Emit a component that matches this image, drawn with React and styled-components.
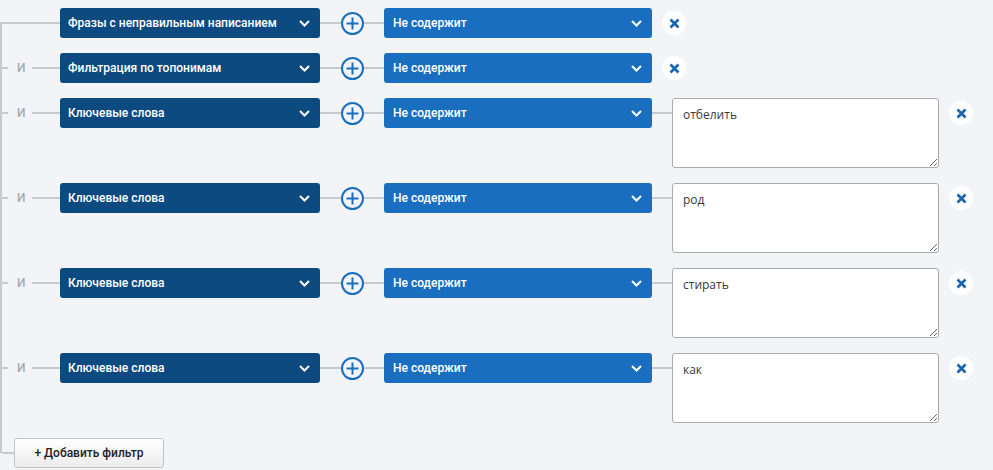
import React from 'react'
import styled, { createGlobalStyle } from 'styled-components'

const GlobalStyle = createGlobalStyle`
  html, body {
    margin: 0;
    background: #f3f4f8;
    font-family: Roboto, "Liberation Sans", Arial, sans-serif;
  }
`

const LINE = '#c9c9c9'

const Tree = styled.div`
  position: relative;
  padding: 8px 0 2px 0;

  &::before {
    content: '';
    position: absolute;
    left: 0;
    top: 22px;
    bottom: 17px;
    width: 2px;
    background: ${LINE};
  }
`

const Row = styled.div`
  display: flex;
  align-items: flex-start;
  margin-bottom: 15px;
`

const Track = styled.div`
  display: flex;
  align-items: center;
  height: 30px;
`

const Connector = styled(Track)`
  width: 60px;
  flex: none;
`

const Seg = styled.div`
  height: 2px;
  background: ${LINE};
  width: ${(p) => (p.$w ? `${p.$w}px` : 'auto')};
  flex: ${(p) => (p.$w ? 'none' : '1')};
  margin-left: ${(p) => (p.$ml || 0)}px;
`

const AndLabel = styled.span`
  width: 9px;
  margin-left: 9px;
  color: #a9a9a9;
  font-size: 12px;
  font-weight: 500;
`

const Select = styled.div`
  box-sizing: border-box;
  width: ${(p) => p.$w}px;
  height: 30px;
  flex: none;
  display: flex;
  align-items: center;
  justify-content: space-between;
  padding: 0 10px 0 ${(p) => p.$pl}px;
  border-radius: 3px;
  background: ${(p) => p.$bg};
  color: #fff;
  font-size: 12px;
  font-weight: 500;
  white-space: nowrap;
`

const PlusCircle = styled.div`
  box-sizing: border-box;
  width: 23px;
  height: 23px;
  flex: none;
  border: 2px solid #1a6ec0;
  border-radius: 50%;
  display: flex;
  align-items: center;
  justify-content: center;
`

const RemoveBtn = styled.div`
  width: 24px;
  height: 24px;
  flex: none;
  margin-left: 10px;
  margin-top: 3px;
  border-radius: 50%;
  background: #fff;
  display: flex;
  align-items: center;
  justify-content: center;
`

const Text = styled.textarea`
  box-sizing: border-box;
  width: 267px;
  height: 70px;
  flex: none;
  margin: 0;
  padding: 8px 10px;
  border: 1px solid #ababab;
  border-radius: 3px;
  background: #fff;
  color: #3a3a3a;
  font-family: "Open Sans", "Liberation Sans", Arial, sans-serif;
  font-size: 12px;
  line-height: 16px;
  outline: none;
`

const AddRow = styled.div`
  display: flex;
  align-items: center;
`

const AddButton = styled.button`
  box-sizing: border-box;
  width: 150px;
  height: 30px;
  padding: 0;
  border: 1px solid #c4c4c4;
  border-radius: 3px;
  background: linear-gradient(#ffffff, #ececec);
  color: #222;
  font-family: Roboto, "Liberation Sans", Arial, sans-serif;
  font-size: 12px;
  font-weight: 500;
`

const Chevron = () => (
  <svg width="11" height="7" viewBox="0 0 11 7">
    <path d="M1 1l4.5 4.5L10 1" fill="none" stroke="#fff" strokeWidth="2" />
  </svg>
)

const Plus = () => (
  <svg width="13" height="13" viewBox="0 0 13 13">
    <path d="M6.5 0.5v12M0.5 6.5h12" stroke="#1a6ec0" strokeWidth="2" />
  </svg>
)

const Cross = () => (
  <svg width="11" height="11" viewBox="0 0 11 11">
    <path d="M1.5 1.5l8 8M9.5 1.5l-8 8" stroke="#1a64b0" strokeWidth="2.6" />
  </svg>
)

const filters = [
  { field: 'Фразы с неправильным написанием' },
  { field: 'Фильтрация по топонимам' },
  { field: 'Ключевые слова', value: 'отбелить' },
  { field: 'Ключевые слова', value: 'род' },
  { field: 'Ключевые слова', value: 'стирать' },
  { field: 'Ключевые слова', value: 'как' },
]

const FilterRow = ({ field, value, first }) => (
  <Row>
    <Connector>
      {first ? (
        <Seg />
      ) : (
        <>
          <Seg $w={6} $ml={2} />
          <AndLabel>И</AndLabel>
          <Seg $ml={6} />
        </>
      )}
    </Connector>
    <Select $w={260} $pl={8} $bg="#0c4a80">
      {field}
      <Chevron />
    </Select>
    <Track>
      <Seg $w={21} />
      <PlusCircle>
        <Plus />
      </PlusCircle>
      <Seg $w={20} />
    </Track>
    <Select $w={268} $pl={9} $bg="#1a6ec0">
      Не содержит
      <Chevron />
    </Select>
    {value !== undefined && (
      <>
        <Track>
          <Seg $w={20} />
        </Track>
        <Text defaultValue={value} />
      </>
    )}
    <RemoveBtn>
      <Cross />
    </RemoveBtn>
  </Row>
)

const App = () => (
  <>
    <GlobalStyle />
    <Tree>
      {filters.map((f, i) => (
        <FilterRow key={i} first={i === 0} {...f} />
      ))}
      <AddRow>
        <Seg $w={12} $ml={2} />
        <AddButton>+ Добавить фильтр</AddButton>
      </AddRow>
    </Tree>
  </>
)

export default App
